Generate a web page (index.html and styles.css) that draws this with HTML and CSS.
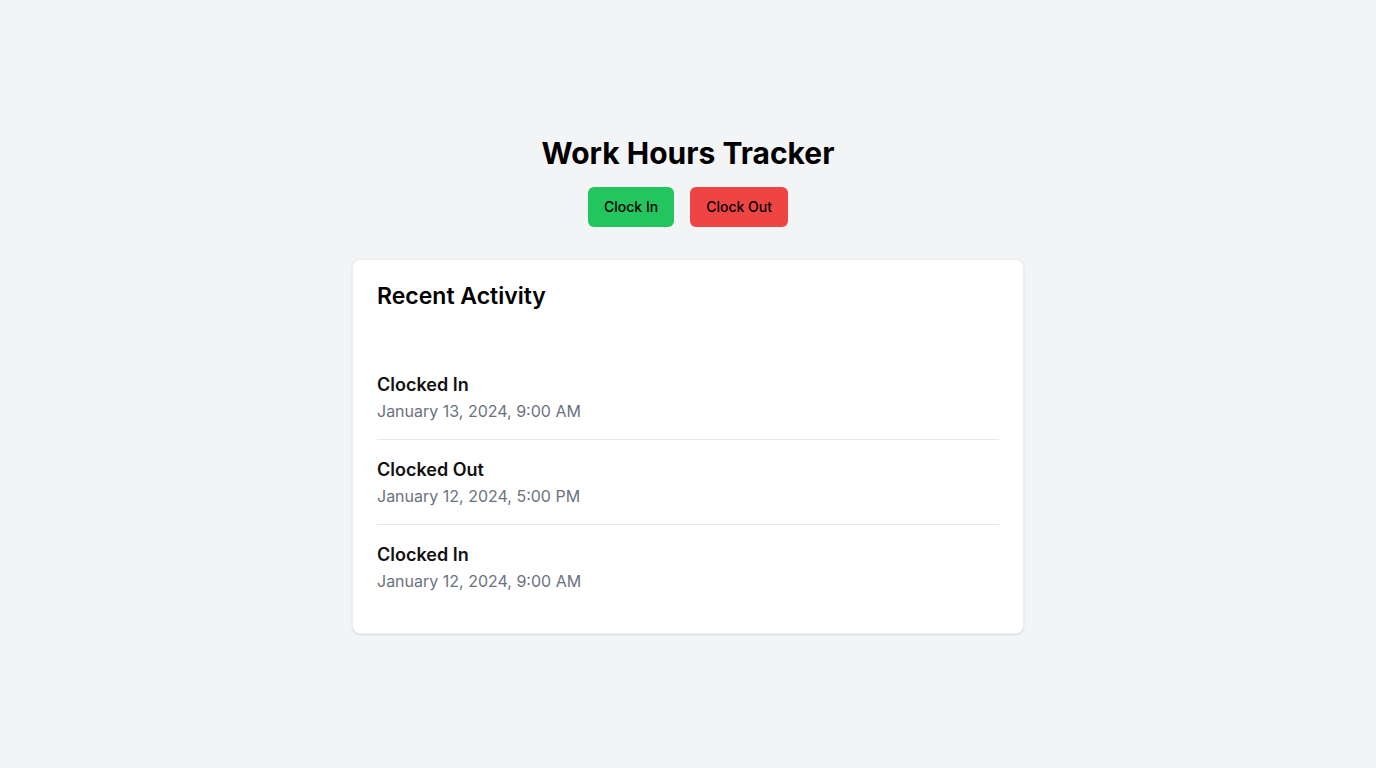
FILE: index.html
```html
<!DOCTYPE html>
<html lang="en">
<head>
<meta charset="utf-8">
<title>Work Hours Tracker</title>
<link rel="stylesheet" href="styles.css">
</head>
<body>
<main class="page">
  <h1 class="title">Work Hours Tracker</h1>
  <div class="actions">
    <button class="btn btn-in">Clock In</button>
    <button class="btn btn-out">Clock Out</button>
  </div>
  <section class="card">
    <h2 class="card-title">Recent Activity</h2>
    <ul class="list">
      <li class="item">
        <div class="item-label">Clocked In</div>
        <div class="item-date">January 13, 2024, 9:00 AM</div>
      </li>
      <li class="item">
        <div class="item-label">Clocked Out</div>
        <div class="item-date">January 12, 2024, 5:00 PM</div>
      </li>
      <li class="item">
        <div class="item-label">Clocked In</div>
        <div class="item-date">January 12, 2024, 9:00 AM</div>
      </li>
    </ul>
  </section>
</main>
</body>
</html>
```
FILE: styles.css
```css
* { box-sizing: border-box; }
html, body { margin: 0; padding: 0; }
body {
  background: #f3f4f6;
  font-family: Inter, "Liberation Sans", Arial, sans-serif;
  color: #111827;
}
.page {
  min-height: 100vh;
  display: flex;
  flex-direction: column;
  align-items: center;
  justify-content: center;
}
.title {
  margin: 0 0 16px;
  font-size: 30px;
  line-height: 36px;
  font-weight: 700;
  color: #000;
}
.actions {
  display: flex;
  gap: 16px;
  margin-bottom: 32px;
}
.btn {
  font-family: inherit;
  font-size: 14px;
  line-height: 20px;
  font-weight: 500;
  padding: 10px 16px;
  border: none;
  border-radius: 6px;
  color: #000;
  cursor: pointer;
}
.btn-in { background: #22c55e; }
.btn-out { background: #ef4444; }
.card {
  width: 672px;
  background: #fff;
  border: 1px solid #eceef1;
  border-radius: 8px;
  padding: 24px;
  box-shadow: 0 1px 3px rgba(0,0,0,0.08), 0 1px 2px -1px rgba(0,0,0,0.08);
}
.card-title {
  margin: 0 0 47px;
  font-size: 23px;
  line-height: 24px;
  font-weight: 600;
  color: #000;
}
.list {
  list-style: none;
  margin: 0;
  padding: 0;
}
.item {
  padding: 16px 0;
  border-bottom: 1px solid #e5e7eb;
}
.item:last-child { border-bottom: none; }
.item-label {
  font-size: 18px;
  line-height: 28px;
  font-weight: 600;
  color: #111;
}
.item-date {
  font-size: 16px;
  line-height: 24px;
  color: #6b7280;
}
```
